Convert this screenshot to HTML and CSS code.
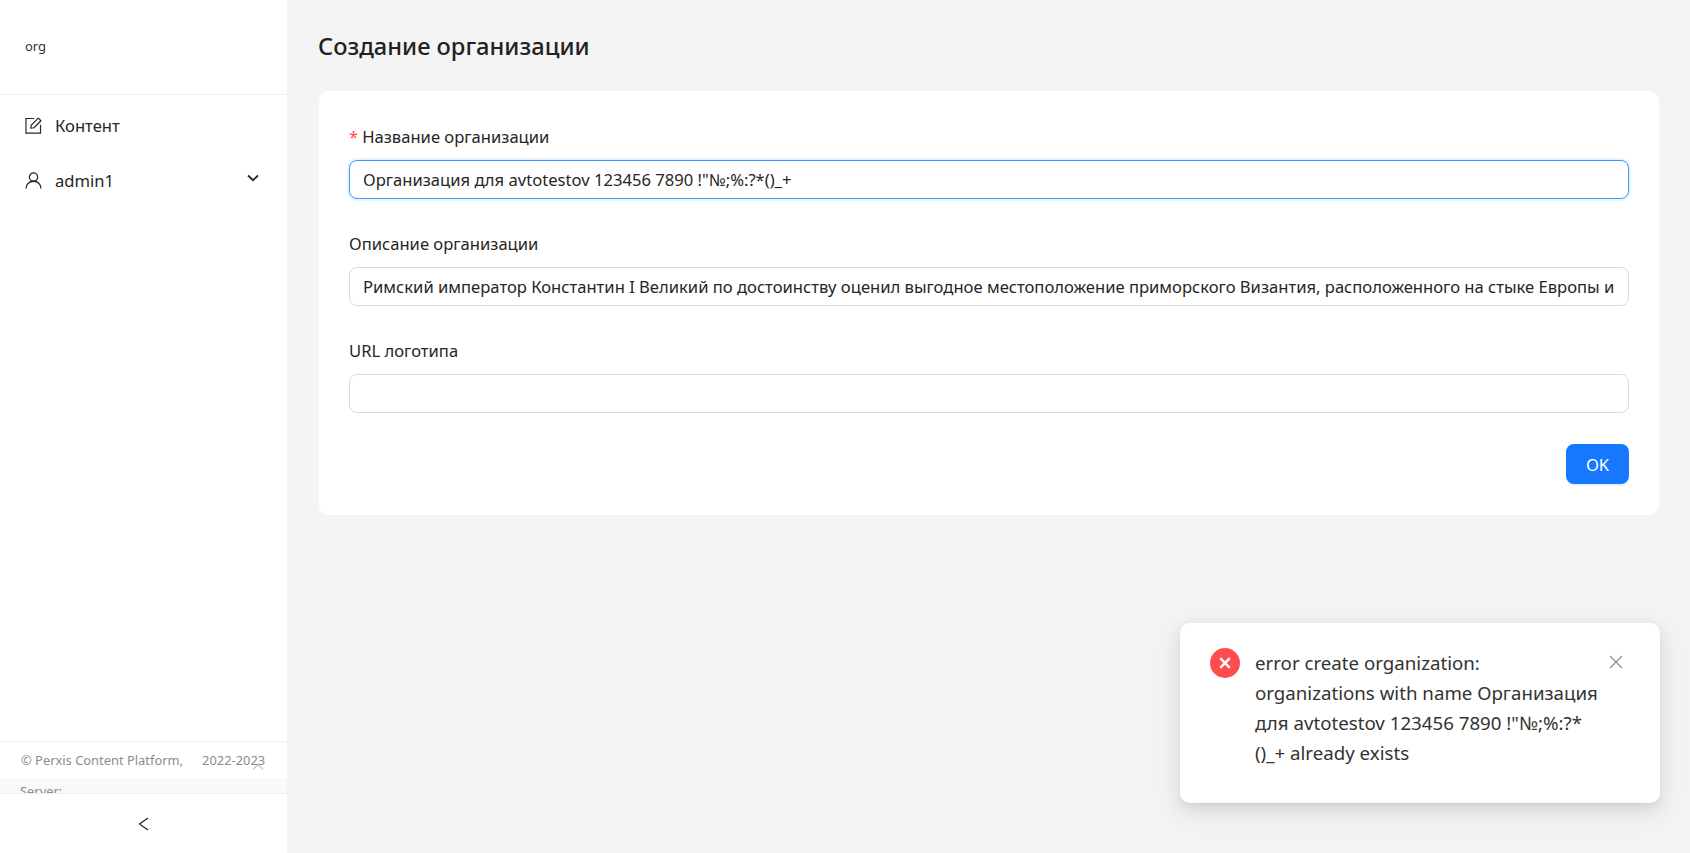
FILE: index.html
```html
<!DOCTYPE html>
<html lang="ru">
<head>
<meta charset="UTF-8">
<meta name="viewport" content="width=device-width, initial-scale=1.0">
<title>Создание организации</title>
<link rel="stylesheet" href="styles.css">
</head>
<body>
<div class="layout">
  <aside class="sidebar">
    <div class="logo">org</div>
    <nav class="menu">
      <a class="menu-item">
        <svg class="menu-icon" viewBox="0 0 16 16" fill="none" stroke="currentColor" stroke-width="1.1">
          <path d="M8.6 1.4H0.9V15.1H14.6V7.4"/>
          <path d="M5.4 10.6L5.9 7.6L12.5 1L15 3.5L8.4 10.1Z" stroke-linejoin="round"/>
        </svg>
        <span>Контент</span>
      </a>
      <a class="menu-item">
        <svg class="menu-icon" viewBox="0 0 16 16" fill="none" stroke="currentColor" stroke-width="1.2">
          <circle cx="8" cy="4.8" r="3.9"/>
          <path d="M1 15.5C1 11.6 4 8.7 8 8.7C12 8.7 15 11.6 15 15.5"/>
        </svg>
        <span class="menu-label">admin1</span>
        <svg class="menu-arrow" viewBox="0 0 12 8" fill="none" stroke="currentColor" stroke-width="1.8">
          <path d="M1 1.5L6 6.2L11 1.5"/>
        </svg>
      </a>
    </nav>
    <div class="footer">
      <div class="copyright">
        <span>© Perxis Content Platform,</span><span class="years">2022-2023</span>
        <svg class="footer-up" viewBox="0 0 12 7" fill="none" stroke="currentColor" stroke-width="1">
          <path d="M1 6.5L6 1.5L11 6.5"/>
        </svg>
      </div>
      <div class="server">Server:</div>
    </div>
    <div class="collapse">
      <svg viewBox="0 0 11 14" fill="none" stroke="currentColor" stroke-width="1.2">
        <path d="M10 1L1.5 7L10 13"/>
      </svg>
    </div>
  </aside>

  <main class="content">
    <h1 class="page-title">Создание организации</h1>
    <form class="card">
      <div class="field">
        <label class="field-label"><span class="required">*</span>Название организации</label>
        <input class="input input-focused" type="text" value="Организация для avtotestov 123456 7890 !&quot;№;%:?*()_+">
      </div>
      <div class="field">
        <label class="field-label">Описание организации</label>
        <input class="input" type="text" value="Римский император Константин I Великий по достоинству оценил выгодное местоположение приморского Византия, расположенного на стыке Европы и">
      </div>
      <div class="field">
        <label class="field-label">URL логотипа</label>
        <input class="input" type="text">
      </div>
      <div class="actions">
        <button class="btn-primary" type="button">OK</button>
      </div>
    </form>
  </main>
</div>

<div class="toast">
  <svg class="toast-icon" viewBox="0 0 30 30">
    <circle cx="15" cy="15" r="15" fill="#ff4d4f"/>
    <path d="M10.2 10.2L19.8 19.8M19.8 10.2L10.2 19.8" stroke="#fff" stroke-width="2.4" fill="none"/>
  </svg>
  <div class="toast-text">error create organization: organizations with name Организация для avtotestov 123456 7890 !"№;%:?*()_+ already exists</div>
  <svg class="toast-close" viewBox="0 0 14 14" fill="none" stroke="currentColor" stroke-width="1.1">
    <path d="M1 1L13 13M13 1L1 13"/>
  </svg>
</div>
</body>
</html>
```

FILE: styles.css
```css
* {
  box-sizing: border-box;
}
html, body {
  height: 100%;
}
body {
  margin: 0;
  background-color: #f4f4f4;
  color: #222;
  font-family: "Noto Sans", "Open Sans", sans-serif;
  font-size: 16.6px;
  overflow: hidden;
}
.layout {
  display: flex;
  height: 100%;
}

/* sidebar */
.sidebar {
  width: 287px;
  flex: none;
  display: flex;
  flex-direction: column;
  background-color: #fff;
}
.logo {
  height: 95px;
  padding: 37px 0 0 25px;
  font-size: 13px;
  line-height: 18px;
  border-bottom: 1px solid #f0f0f0;
  color: #333;
}
.menu {
  flex: 1;
  padding-top: 5px;
}
.menu-item {
  display: flex;
  align-items: center;
  height: 50px;
  margin-bottom: 5px;
  padding: 0 27px 0 25px;
  color: #262626;
  font-size: 16.6px;
}
.menu-icon {
  width: 17px;
  height: 17px;
  margin-right: 13px;
  flex: none;
}
.menu-label {
  flex: 1;
}
.menu-arrow {
  width: 12px;
  height: 8px;
  margin: -4px 1px 0 0;
}
.footer {
  height: 52px;
  border-top: 1px solid #f0f0f0;
  overflow: hidden;
  font-size: 12.9px;
  color: #8c8c8c;
}
.copyright {
  position: relative;
  height: 36px;
  padding: 9px 0 0 21px;
  line-height: 18px;
  white-space: nowrap;
}
.years {
  margin-left: 19px;
}
.footer-up {
  position: absolute;
  left: 252px;
  top: 21px;
  width: 12px;
  height: 7px;
  color: #999;
}
.server {
  height: 16px;
  padding: 4px 0 0 20px;
  line-height: 18px;
  background-color: #fafafa;
}
.collapse {
  height: 60px;
  display: flex;
  align-items: center;
  justify-content: center;
  border-top: 1px solid #f0f0f0;
  color: #262626;
}
.collapse svg {
  width: 11px;
  height: 14px;
}

/* main */
.content {
  flex: 1;
  padding: 0 31px 0 32px;
}
.page-title {
  margin: 0 0 0 -1px;
  height: 91px;
  padding-top: 28px;
  font-size: 23.7px;
  line-height: 36px;
  font-weight: 500;
  color: #222;
}
.card {
  height: 424px;
  padding: 32px 30px 0;
  background-color: #fff;
  border-radius: 10px;
}
.field {
  margin-bottom: 31px;
}
.field-label {
  display: block;
  height: 37px;
  line-height: 28px;
  color: #262626;
}
.required {
  margin-right: 4px;
  color: #ff4d4f;
}
.input {
  display: block;
  width: 100%;
  height: 39px;
  padding: 0 13px;
  border: 1px solid #d9d9d9;
  border-radius: 8px;
  font: inherit;
  color: #262626;
  background-color: #fff;
  outline: none;
}
.input-focused {
  border-color: #4096ff;
  box-shadow: 0 0 0 2px rgba(5, 145, 255, 0.1);
}
.actions {
  display: flex;
  justify-content: flex-end;
}
.btn-primary {
  width: 63px;
  height: 40px;
  border: none;
  border-radius: 8px;
  background-color: #1677ff;
  color: #fff;
  font: inherit;
  box-shadow: 0 2px 0 rgba(5, 145, 255, 0.1);
}

/* notification */
.toast {
  position: absolute;
  left: 1180px;
  top: 623px;
  width: 480px;
  height: 180px;
  display: flex;
  align-items: flex-start;
  padding: 25px 30px 0;
  background-color: #fff;
  border-radius: 10px;
  box-shadow: 0 6px 16px rgba(0, 0, 0, 0.08), 0 3px 6px -4px rgba(0, 0, 0, 0.12), 0 9px 28px 8px rgba(0, 0, 0, 0.05);
}
.toast-icon {
  width: 30px;
  height: 30px;
  flex: none;
  margin-right: 15px;
}
.toast-text {
  width: 346px;
  font-size: 18.7px;
  line-height: 30px;
  color: #333;
}
.toast-close {
  position: absolute;
  right: 37px;
  top: 32px;
  width: 14px;
  height: 14px;
  color: #8c8c8c;
}
```
